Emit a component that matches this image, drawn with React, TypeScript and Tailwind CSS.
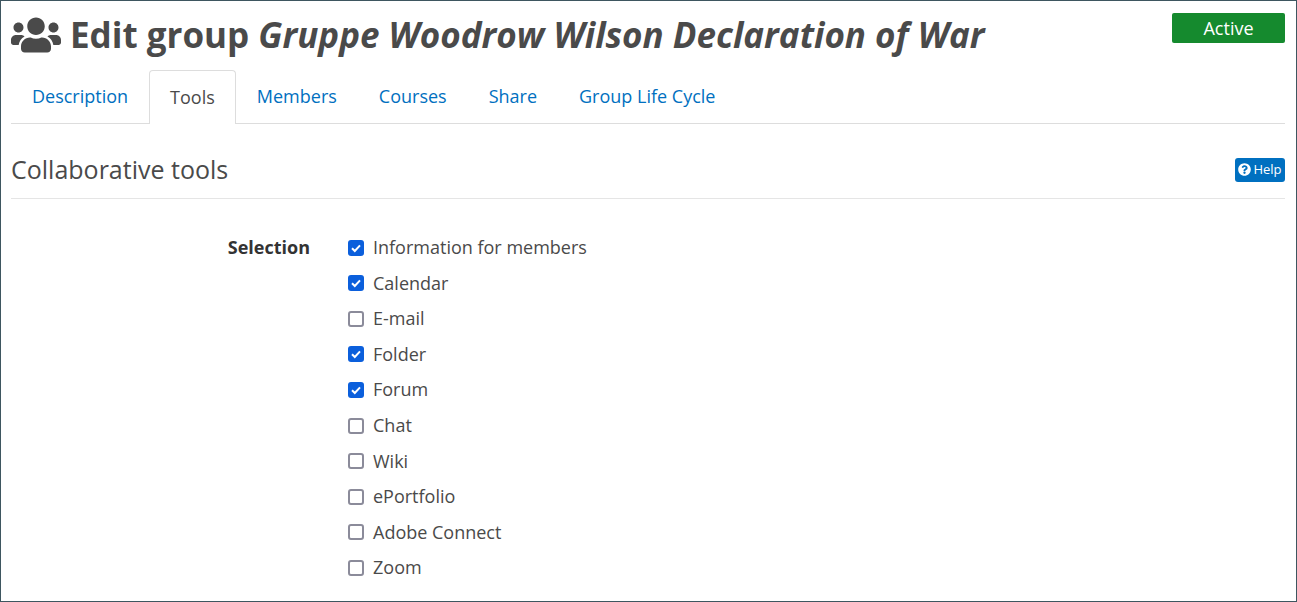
import { FaUsers, FaQuestionCircle } from 'react-icons/fa'

const tabs = ['Description', 'Tools', 'Members', 'Courses', 'Share', 'Group Life Cycle']

const tools = [
  { label: 'Information for members', checked: true },
  { label: 'Calendar', checked: true },
  { label: 'E-mail', checked: false },
  { label: 'Folder', checked: true },
  { label: 'Forum', checked: true },
  { label: 'Chat', checked: false },
  { label: 'Wiki', checked: false },
  { label: 'ePortfolio', checked: false },
  { label: 'Adobe Connect', checked: false },
  { label: 'Zoom', checked: false },
]

const ToolCheckbox = ({ label, checked }: { label: string; checked: boolean }) => {
  return (
    <div className="flex h-[35.55px] items-center">
      {checked ? (
        <span className="flex h-4 w-4 items-center justify-center rounded-[3px] bg-[#0b5fdc]">
          <svg viewBox="0 0 16 16" className="h-4 w-4">
            <path d="M4 8.3l2.8 2.7L12 5.4" fill="none" stroke="#fff" strokeWidth="2" />
          </svg>
        </span>
      ) : (
        <span className="h-4 w-4 rounded-[3px] border-2 border-[#8b8b9a] bg-white"></span>
      )}
      <span className="ml-[9px] text-[18px] text-[#4a4a4a]">{label}</span>
    </div>
  )
}

export default function App() {
  return (
    <div className="h-[602px] w-[1297px] overflow-hidden border border-[#3e5660] bg-white pl-[10px] pr-[11px] font-['Open_Sans',sans-serif]">
      <div className="flex h-[69px] items-start justify-between">
        <h1 className="mt-[11px] flex items-center text-[35px] leading-[46px] font-bold text-[#4a4a4a]">
          <FaUsers className="mr-[9px] h-[40px] w-[50px]" />
          <span>
            Edit group <em className="font-bold">Gruppe Woodrow Wilson Declaration of War</em>
          </span>
        </h1>
        <div className="mt-3 flex h-[30px] w-[113px] items-center justify-center rounded-[2px] bg-[#158a2e] text-[18px] text-white">
          Active
        </div>
      </div>

      <div className="flex h-[54px] border-b border-[#dddddd]">
        {tabs.map((tab) =>
          tab === 'Tools' ? (
            <div
              key={tab}
              className="mb-[-1px] flex items-center rounded-t border border-b-0 border-[#dddddd] bg-white px-5 text-[18px] text-[#4a4a4a]"
            >
              {tab}
            </div>
          ) : (
            <div key={tab} className="flex items-center px-[21px] text-[18px] text-[#0070c0]">
              {tab}
            </div>
          ),
        )}
      </div>

      <div className="flex h-[75px] items-center justify-between border-b border-[#e5e5e5] pt-[17px]">
        <h2 className="text-[25px] text-[#4a4a4a]">Collaborative tools</h2>
        <div className="flex h-6 w-[50px] items-center justify-center gap-[2px] rounded-[3px] bg-[#0070c0] text-[13px] text-white">
          <FaQuestionCircle className="h-[13px] w-[13px]" />
          Help
        </div>
      </div>

      <div className="flex pt-[31px]">
        <div className="w-[299px] pt-[4px] text-right text-[18px] leading-[27px] font-bold text-[#333333]">Selection</div>
        <div className="ml-[38px] flex flex-col">
          {tools.map((tool) => (
            <ToolCheckbox key={tool.label} label={tool.label} checked={tool.checked} />
          ))}
        </div>
      </div>
    </div>
  )
}
